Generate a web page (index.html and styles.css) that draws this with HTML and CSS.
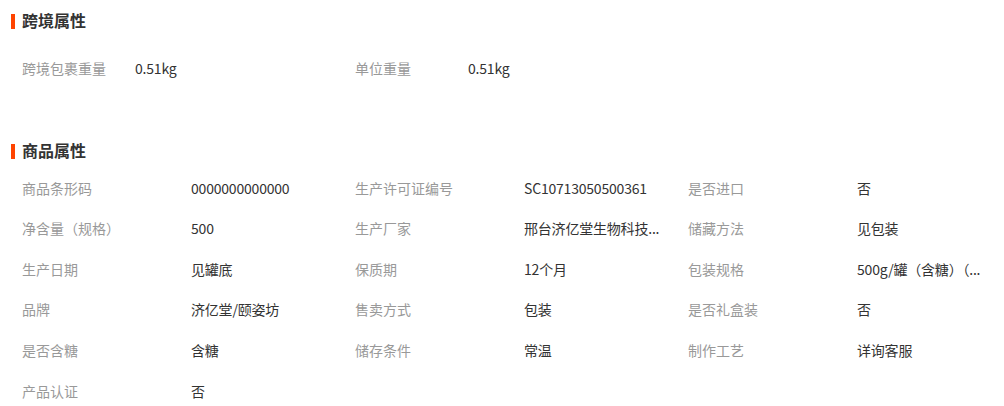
FILE: index.html
```html
<!DOCTYPE html>
<html>
<head>
    <meta charset="UTF-8">
    <title>商品属性</title>
    <link rel="stylesheet" href="styles.css">
</head>
<body>
    <div class="attr-section">
        <h3 class="attr-title">跨境属性</h3>
        <ul class="attr-list attr-list-cross">
            <li><span class="attr-name">跨境包裹重量</span><span class="attr-value">0.51kg</span></li>
            <li><span class="attr-name">单位重量</span><span class="attr-value">0.51kg</span></li>
        </ul>
    </div>

    <div class="attr-section">
        <h3 class="attr-title">商品属性</h3>
        <ul class="attr-list">
            <li><span class="attr-name">商品条形码</span><span class="attr-value">0000000000000</span></li>
            <li><span class="attr-name">生产许可证编号</span><span class="attr-value">SC10713050500361</span></li>
            <li><span class="attr-name">是否进口</span><span class="attr-value">否</span></li>
            <li><span class="attr-name">净含量（规格）</span><span class="attr-value">500</span></li>
            <li><span class="attr-name">生产厂家</span><span class="attr-value">邢台济亿堂生物科技...</span></li>
            <li><span class="attr-name">储藏方法</span><span class="attr-value">见包装</span></li>
            <li><span class="attr-name">生产日期</span><span class="attr-value">见罐底</span></li>
            <li><span class="attr-name">保质期</span><span class="attr-value">12个月</span></li>
            <li><span class="attr-name">包装规格</span><span class="attr-value">500g/罐（含糖）（...</span></li>
            <li><span class="attr-name">品牌</span><span class="attr-value">济亿堂/颐姿坊</span></li>
            <li><span class="attr-name">售卖方式</span><span class="attr-value">包装</span></li>
            <li><span class="attr-name">是否礼盒装</span><span class="attr-value">否</span></li>
            <li><span class="attr-name">是否含糖</span><span class="attr-value">含糖</span></li>
            <li><span class="attr-name">储存条件</span><span class="attr-value">常温</span></li>
            <li><span class="attr-name">制作工艺</span><span class="attr-value">详询客服</span></li>
            <li><span class="attr-name">产品认证</span><span class="attr-value">否</span></li>
        </ul>
    </div>
</body>
</html>
```

FILE: styles.css
```css
body {
    margin: 0;
    padding: 0;
    background-color: #fff;
    color: #333;
    font-family: "Noto Sans CJK SC", sans-serif;
    font-size: 14px;
}
.attr-section {
    padding-top: 2px;
}
.attr-title {
    margin: 0;
    padding-left: 22px;
    position: relative;
    height: 36px;
    line-height: 36px;
    font-size: 16px;
    font-weight: bold;
    color: #333;
}
.attr-title::before { /* red marker bar */
    content: "";
    position: absolute;
    left: 11px;
    top: 12px;
    width: 4px;
    height: 15px;
    background-color: #f40;
}
.attr-list {
    list-style: none;
    margin: 0;
    padding: 0 0 0 22px;
    display: grid;
    grid-template-columns: repeat(3, 333px);
}
.attr-list li {
    display: flex;
    height: 40.6px;
    line-height: 40px;
}
.attr-name {
    width: 169px;
    flex-shrink: 0;
    color: #999;
}
.attr-value {
    width: 150px;
    color: #333;
    letter-spacing: -0.2px;
    white-space: nowrap;
    overflow: hidden;
}
.attr-list-cross {
    padding-top: 10px;
    padding-bottom: 41px;
}
.attr-list-cross .attr-name {
    width: 113px;
}
```
